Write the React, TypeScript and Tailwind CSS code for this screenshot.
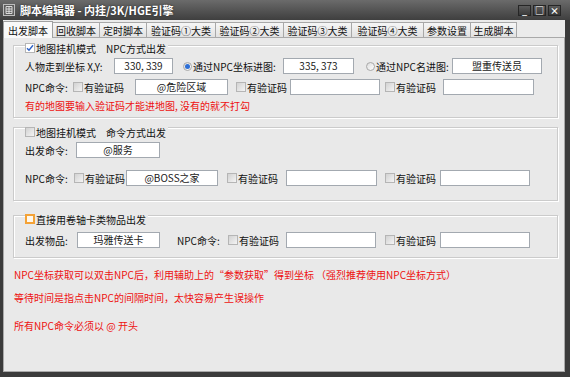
import type { ReactNode } from 'react'

function Field({ className = '', children }: { className?: string; children?: ReactNode }) {
  return (
    <div className={`h-[16px] shrink-0 bg-white border border-[#a3a9b0] flex items-center justify-center text-[10px] leading-none text-[#1a1a1a] ${className}`}>
      {children}
    </div>
  )
}

function Box({ checked = false, orange = false }: { checked?: boolean; orange?: boolean }) {
  if (orange) {
    return <span className="w-[10px] h-[10px] shrink-0 border-2 border-[#f4a236] bg-[#fff8ec]" />
  }
  return (
    <span
      className={`w-[10px] h-[10px] shrink-0 border border-[#b5b5b5] flex items-center justify-center ${
        checked ? 'bg-white' : 'bg-linear-to-br from-[#d2d2d2] to-[#f4f4f4]'
      }`}
    >
      {checked && (
        <svg width="8" height="8" viewBox="0 0 8 8">
          <path d="M1 4.2 L3 6.3 L7 1.2" fill="none" stroke="#2f63c8" strokeWidth="1.4" />
        </svg>
      )}
    </span>
  )
}

function Radio({ checked = false }: { checked?: boolean }) {
  return (
    <span className="w-[9px] h-[9px] shrink-0 rounded-full border border-[#a8a8a8] bg-linear-to-br from-[#dcdcdc] to-white flex items-center justify-center">
      {checked && <span className="w-[5px] h-[5px] rounded-full bg-[#2e6fd6]" />}
    </span>
  )
}

function CheckText({ className = '' }: { className?: string }) {
  return (
    <div className={`shrink-0 flex items-center gap-[1px] ${className}`}>
      <Box />
      <span>有验证码</span>
    </div>
  )
}

const tabs = [
  { name: '出发脚本', w: 'w-[50px]' },
  { name: '回收脚本', w: 'w-[47px]' },
  { name: '定时脚本', w: 'w-[47px]' },
  { name: '验证码①大类', w: 'w-[69px]' },
  { name: '验证码②大类', w: 'w-[68px]' },
  { name: '验证码③大类', w: 'w-[68px]' },
  { name: '验证码④大类', w: 'w-[72px]' },
  { name: '参数设置', w: 'w-[47px]' },
  { name: '生成脚本', w: 'w-[46px]' },
]

export default function App() {
  return (
    <div className="w-[570px] h-[377px] bg-[#3b3b3b] flex flex-col overflow-hidden whitespace-nowrap font-['Noto_Sans_CJK_SC','Noto_Sans',sans-serif] text-[10px] text-[#111]">
      {/* Title bar */}
      <div className="h-[20px] shrink-0 flex items-center bg-linear-to-b from-[#6b6b6b] to-[#3f3f3f] pl-[3px] pr-[9px]">
        <svg width="12" height="12" viewBox="0 0 12 12" className="shrink-0">
          <rect x="0.5" y="0.5" width="11" height="11" fill="#5d5d5d" stroke="#bdbdbd" />
          <path d="M3 2.5 V9.5 M3 2.5 H9 V9.5 H3 M3 5 H9 M3 7.3 H9 M6 2.5 V9.5" fill="none" stroke="#e6e6e6" strokeWidth="0.9" />
        </svg>
        <span className="ml-[5px] text-white text-[11px] font-bold leading-none [text-shadow:0_0_2px_#222]">
          脚本编辑器 - 内挂/3K/HGE引擎
        </span>
        <div className="ml-auto flex gap-[2px]">
          {['_', '□', '×'].map((g) => (
            <div
              key={g}
              className="w-[13px] h-[11px] border border-[#262626] bg-linear-to-b from-[#5c5c5c] to-[#383838] flex items-center justify-center text-white text-[9px] font-bold leading-none"
            >
              {g}
            </div>
          ))}
        </div>
      </div>

      {/* Window body */}
      <div className="flex-1 ml-[3px] mr-[5px] mb-[5px] bg-[#ebebeb] flex flex-col">
        {/* Tabs */}
        <div className="h-[17px] shrink-0 flex items-end">
          {tabs.map((t, i) =>
            i === 0 ? (
              <div
                key={t.name}
                className={`${t.w} h-[17px] -mb-px relative z-10 bg-[#f9f9f9] border border-b-0 border-[#a0a0a0] flex items-center justify-center`}
              >
                {t.name}
              </div>
            ) : (
              <div
                key={t.name}
                className={`${t.w} h-[15px] border-t border-r border-[#a8a8a8] bg-linear-to-b from-[#f6f6f6] to-[#e2e2e2] flex items-center justify-center`}
              >
                {t.name}
              </div>
            )
          )}
        </div>

        {/* Panel */}
        <div className="flex-1 border border-[#a9a9a9] bg-[#e9e9e9] flex flex-col">
          {/* Group 1 */}
          <div className="relative mt-[7px] ml-[9px] w-[545px] h-[73px] shrink-0 border border-[#cbcbcb] shadow-[inset_1px_1px_0_#fff,1px_1px_0_#fff]">
            <div className="absolute top-[-4px] left-[11px] h-[12px] bg-[#e9e9e9] pr-[2px] flex items-center gap-[1px]">
              <Box checked />
              <span>地图挂机模式</span>
              <span className="ml-[9px]">NPC方式出发</span>
            </div>
            <div className="mt-[12px] pl-[11px] h-[16px] flex items-center">
              <span className="w-[89px] shrink-0">人物走到坐标 X,Y:</span>
              <Field className="w-[59px]">330, 339</Field>
              <div className="w-[110px] shrink-0 pl-[10px] flex items-center gap-[1px]">
                <Radio checked />
                <span>通过NPC坐标进图:</span>
              </div>
              <Field className="w-[71px]">335, 373</Field>
              <div className="w-[98px] shrink-0 pl-[12px] flex items-center gap-[1px]">
                <Radio />
                <span>通过NPC名进图:</span>
              </div>
              <Field className="w-[90px]">盟重传送员</Field>
            </div>
            <div className="mt-[5px] pl-[11px] h-[16px] flex items-center">
              <span className="w-[48px] shrink-0">NPC命令:</span>
              <CheckText className="w-[62px]" />
              <Field className="w-[93px]">@危险区域</Field>
              <CheckText className="w-[62px] pl-[8px]" />
              <Field className="w-[90px]" />
              <CheckText className="w-[63px] pl-[5px]" />
              <Field className="w-[91px]" />
            </div>
            <div className="mt-[4px] pl-[11px] h-[12px] flex items-center text-[#ee1111]">
              有的地图要输入验证码才能进地图, 没有的就不打勾
            </div>
          </div>

          {/* Group 2 */}
          <div className="relative mt-[9px] ml-[9px] w-[545px] h-[74px] shrink-0 border border-[#cbcbcb] shadow-[inset_1px_1px_0_#fff,1px_1px_0_#fff]">
            <div className="absolute top-[-2px] left-[11px] h-[12px] bg-[#e9e9e9] pr-[2px] flex items-center gap-[1px]">
              <Box />
              <span>地图挂机模式</span>
              <span className="ml-[9px]">命令方式出发</span>
            </div>
            <div className="mt-[14px] pl-[11px] h-[16px] flex items-center">
              <span className="w-[51px] shrink-0">出发命令:</span>
              <Field className="w-[84px]">@服务</Field>
            </div>
            <div className="mt-[12px] pl-[11px] h-[16px] flex items-center">
              <span className="w-[48px] shrink-0">NPC命令:</span>
              <CheckText className="w-[53px] pl-[1px]" />
              <Field className="w-[92px]">@BOSS之家</Field>
              <CheckText className="w-[68px] pl-[9px]" />
              <Field className="w-[91px]" />
              <CheckText className="w-[63px] pl-[8px]" />
              <Field className="w-[90px]" />
            </div>
          </div>

          {/* Group 3 */}
          <div className="relative mt-[14px] ml-[9px] w-[545px] h-[43px] shrink-0 border border-[#cbcbcb] shadow-[inset_1px_1px_0_#fff,1px_1px_0_#fff]">
            <div className="absolute top-[-3px] left-[11px] h-[12px] bg-[#e9e9e9] pr-[2px] flex items-center gap-[1px]">
              <Box orange />
              <span>直接用卷轴卡类物品出发</span>
            </div>
            <div className="mt-[16px] pl-[11px] h-[16px] flex items-center">
              <span className="w-[52px] shrink-0">出发物品:</span>
              <Field className="w-[83px]">玛雅传送卡</Field>
              <span className="w-[68px] shrink-0 pl-[17px]">NPC命令:</span>
              <CheckText className="w-[58px]" />
              <Field className="w-[90px]" />
              <CheckText className="w-[64px] pl-[9px]" />
              <Field className="w-[90px]" />
            </div>
          </div>

          {/* Notes */}
          <div className="pl-[10px] text-[#ee1111] flex flex-col">
            <p className="mt-[11px] h-[12px] leading-[12px]">
              NPC坐标获取可以双击NPC后，利用辅助上的“参数获取”得到坐标 （强烈推荐使用NPC坐标方式）
            </p>
            <p className="mt-[11px] h-[12px] leading-[12px]">等待时间是指点击NPC的间隔时间，太快容易产生误操作</p>
            <p className="mt-[16px] h-[12px] leading-[12px]">所有NPC命令必须以 @ 开头</p>
          </div>
        </div>
      </div>
    </div>
  )
}
